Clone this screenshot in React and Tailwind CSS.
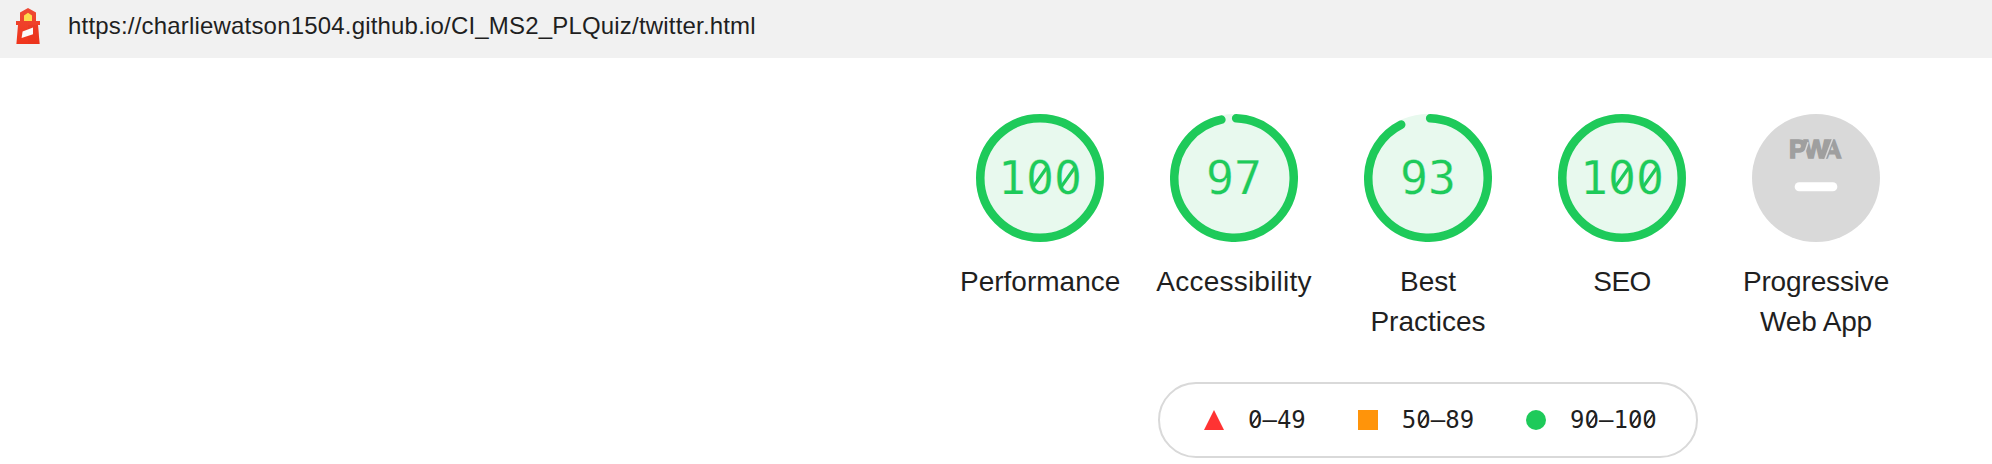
const gauges = [
  { label: 'Performance', score: 100 },
  { label: 'Accessibility', score: 97, tracking: 'tracking-[0.22px]' },
  { label: 'Best Practices', score: 93 },
  { label: 'SEO', score: 100, tracking: 'tracking-[-0.6px]' },
];

const CIRCUMFERENCE = 2 * Math.PI * 56;

function LighthouseLogo() {
  return (
    <svg width="24" height="36" viewBox="0 0 24 36" className="shrink-0">
      <defs>
        <linearGradient id="tower" x1="0" y1="0" x2="0" y2="1">
          <stop offset="0" stopColor="#ee4a35" />
          <stop offset="1" stopColor="#f0351c" />
        </linearGradient>
      </defs>
      <path
        d="M4 4.6 12 0l8 4.6V13h4v4h-2l1.6 19H.4L2 17H0v-4h4z"
        fill="url(#tower)"
      />
      <path d="M12 17h10l1.6 19H12z" fill="#e6351f" opacity=".35" />
      <path d="M8 7.4 12 4.8l4 2.6V13H8z" fill="#fddb4c" />
      <path d="M6.6 23.6 17 19.6v6.6L5.6 30z" fill="#fafafa" />
    </svg>
  );
}

// Monospace digits; zeros carry a full diagonal slash.
function Digits({ text, fill }) {
  return (
    <span className="inline-flex whitespace-pre">
      {text.split('').map((ch, i) =>
        ch === '0' ? (
          <span key={i} className="relative">
            0
            <svg
              viewBox="0 0 60 100"
              className="absolute left-0 top-1/2 h-[1em] w-[0.6em] -translate-y-1/2"
            >
              <ellipse cx="30" cy="48" rx="11.5" ry="21" fill={fill} />
              <path d="M15.5 69 44.5 28" stroke="currentColor" strokeWidth="7" />
            </svg>
          </span>
        ) : (
          <span key={i}>{ch}</span>
        ),
      )}
    </span>
  );
}

function Gauge({ label, score, tracking = '' }) {
  const full = score === 100;
  const arc = full ? CIRCUMFERENCE : (score / 100) * CIRCUMFERENCE - 4;
  return (
    <div className="flex w-[194px] flex-col items-center">
      <div className="grid size-32 place-items-center">
        <svg viewBox="0 0 120 120" className="col-start-1 row-start-1 size-32">
          <circle cx="60" cy="60" r="60" fill="#e8f9ee" />
          <circle
            cx="60"
            cy="60"
            r="56"
            fill="none"
            stroke="#1eca5a"
            strokeWidth="8"
            strokeLinecap="round"
            strokeDasharray={`${arc} ${CIRCUMFERENCE}`}
            transform={full ? 'rotate(-90 60 60)' : 'rotate(-87.95 60 60)'}
          />
        </svg>
        <div className="col-start-1 row-start-1 font-['DejaVu_Sans_Mono',monospace] text-[46.5px] leading-[54px] text-[#1eca5a] [-webkit-text-stroke:0.25px_#e8f9ee]">
          <Digits text={String(score)} fill="#e8f9ee" />
        </div>
      </div>
      <div className={`mt-5 w-40 text-center text-[28px] leading-10 ${tracking}`}>
        {label}
      </div>
    </div>
  );
}

function PwaGauge() {
  return (
    <div className="flex w-[194px] flex-col items-center">
      <svg viewBox="0 0 60 60" className="size-32">
        <circle cx="30" cy="30" r="30" fill="#d9d9d9" />
        <text
          x="17.4 24.4 33.2"
          y="20.7"
          fontSize="12.2"
          fill="#9f9f9f"
          stroke="#9f9f9f"
          strokeWidth=".7"
          className="font-['Liberation_Sans',Arial,sans-serif] font-bold"
        >
          PWA
        </text>
        <path
          d="M26.3 13.2 23.6 21.6M37.8 11.6 34.1 21.5"
          stroke="#d9d9d9"
          strokeWidth=".7"
        />
        <rect x="20" y="32" width="20" height="4.2" rx="2.1" fill="#fff" />
      </svg>
      <div className="mt-5 w-40 text-center text-[28px] leading-10 tracking-[-0.15px]">
        Progressive Web App
      </div>
    </div>
  );
}

function LegendItem({ children, text }) {
  return (
    <div className="flex items-center gap-6">
      <svg viewBox="0 0 20 20" className="size-5">{children}</svg>
      <Digits text={text} fill="#fff" />
    </div>
  );
}

export default function App() {
  return (
    <div className="h-[464px] w-[1992px] overflow-hidden bg-white font-['Liberation_Sans',Arial,sans-serif] text-[#1f1f1f]">
      <header className="flex h-[58px] items-center bg-[#f1f1f1] pb-1.5 pl-4">
        <LighthouseLogo />
        <span className="ml-7 text-[24px] leading-7 tracking-[0.185px]">
          https://charliewatson1504.github.io/CI_MS2_PLQuiz/twitter.html
        </span>
      </header>
      <main className="ml-[943px] flex w-[970px] flex-col items-center pt-14">
        <div className="flex h-[268px]">
          {gauges.map((g) => (
            <Gauge key={g.label} {...g} />
          ))}
          <PwaGauge />
        </div>
        <div className="flex h-19 w-[540px] items-center gap-[52px] rounded-[38px] border-2 border-[#d9d9d9] pl-11 font-['DejaVu_Sans_Mono',monospace] text-[24px] leading-8">
          <LegendItem text="0–49">
            <path d="M10 0 20 20H0z" fill="#ff3333" />
          </LegendItem>
          <LegendItem text="50–89">
            <path d="M0 0h20v20H0z" fill="#ff940a" />
          </LegendItem>
          <LegendItem text="90–100">
            <circle cx="10" cy="10" r="10" fill="#1eca5a" />
          </LegendItem>
        </div>
      </main>
    </div>
  );
}
